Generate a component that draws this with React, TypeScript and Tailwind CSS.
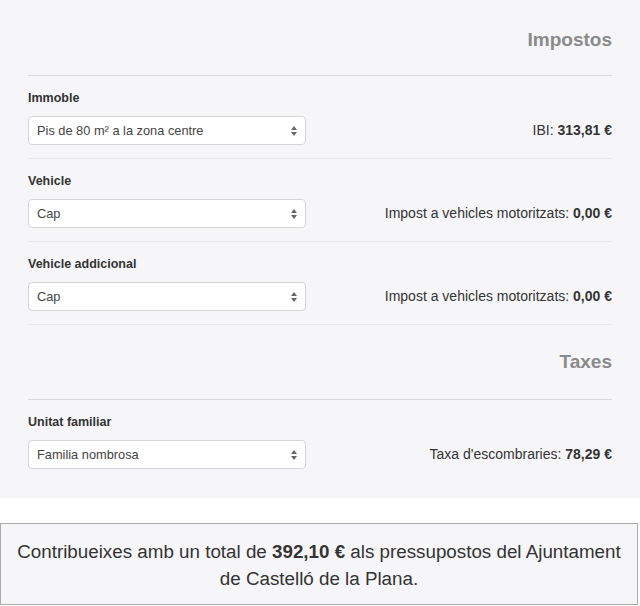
import { useState } from "react";

type Row = {
  id: string;
  label: string;
  options: string[];
  valueLabel: string;
  amount: string;
};

const impostos: Row[] = [
  {
    id: "immoble",
    label: "Immoble",
    options: ["Pis de 80 m² a la zona centre", "Pis de 60 m²", "Casa unifamiliar"],
    valueLabel: "IBI:",
    amount: "313,81 €",
  },
  {
    id: "vehicle",
    label: "Vehicle",
    options: ["Cap", "Turisme", "Motocicleta"],
    valueLabel: "Impost a vehicles motoritzats:",
    amount: "0,00 €",
  },
  {
    id: "vehicle2",
    label: "Vehicle addicional",
    options: ["Cap", "Turisme", "Motocicleta"],
    valueLabel: "Impost a vehicles motoritzats:",
    amount: "0,00 €",
  },
];

const taxes: Row[] = [
  {
    id: "familia",
    label: "Unitat familiar",
    options: ["Familia nombrosa", "Unipersonal", "Estàndard"],
    valueLabel: "Taxa d'escombraries:",
    amount: "78,29 €",
  },
];

function Arrows() {
  return (
    <svg
      className="pointer-events-none absolute right-[9px] top-1/2 -translate-y-1/2"
      width="6"
      height="10"
      viewBox="0 0 6 10"
    >
      <path d="M3 0 L6 4 L0 4 Z" fill="#666" />
      <path d="M0 6 L6 6 L3 10 Z" fill="#666" />
    </svg>
  );
}

function SelectRow({ row, last }: { row: Row; last?: boolean }) {
  const [value, setValue] = useState(row.options[0]);
  return (
    <div className={last ? "pt-[15px] pb-[13px]" : "border-b border-[#e9e9ec] pt-[15px] pb-[13px]"}>
      <div className="mb-[10px] text-[12.5px] leading-[15px] font-bold text-[#333]">{row.label}</div>
      <div className="flex items-center justify-between">
        <div className="relative w-[278px]">
          <select
            className="h-[29px] w-full appearance-none rounded-[4px] border border-[#d6d6d9] bg-white pl-[8px] text-[12.8px] text-[#444] outline-none"
            value={value}
            onChange={(e) => setValue(e.target.value)}
          >
            {row.options.map((o) => (
              <option key={o}>{o}</option>
            ))}
          </select>
          <Arrows />
        </div>
        <div className="text-[14px] text-[#333]">
          {row.valueLabel} <span className="font-bold">{row.amount}</span>
        </div>
      </div>
    </div>
  );
}

function Heading({ title, first }: { title: string; first?: boolean }) {
  return (
    <div
      className={
        first
          ? "border-b border-[#d9d9dc] pt-[29px] pb-[24px] text-right"
          : "border-b border-[#d9d9dc] pt-[26px] pb-[26px] text-right"
      }
    >
      <h2 className="text-[19px] leading-[22px] font-bold text-[#8a8a8a]">{title}</h2>
    </div>
  );
}

export default function App() {
  return (
    <div className="min-h-screen bg-white font-['Liberation_Sans',Arial,sans-serif]">
      <div className="bg-[#f6f6f8] px-[28px] pb-[16px]">
        <Heading title="Impostos" first />
        {impostos.map((r) => (
          <SelectRow key={r.id} row={r} />
        ))}
        <Heading title="Taxes" />
        {taxes.map((r, i) => (
          <SelectRow key={r.id} row={r} last={i === taxes.length - 1} />
        ))}
      </div>

      <div className="mt-[25px] mr-[2px] border border-[#ababab] bg-[#f6f6f8] px-[8px] pt-[14px] pb-[12px] text-center text-[18.8px] leading-[27px] text-[#333]">
        Contribueixes amb un total de <span className="font-bold">392,10 €</span> als pressupostos del Ajuntament
        <br />
        de Castelló de la Plana.
      </div>
    </div>
  );
}
